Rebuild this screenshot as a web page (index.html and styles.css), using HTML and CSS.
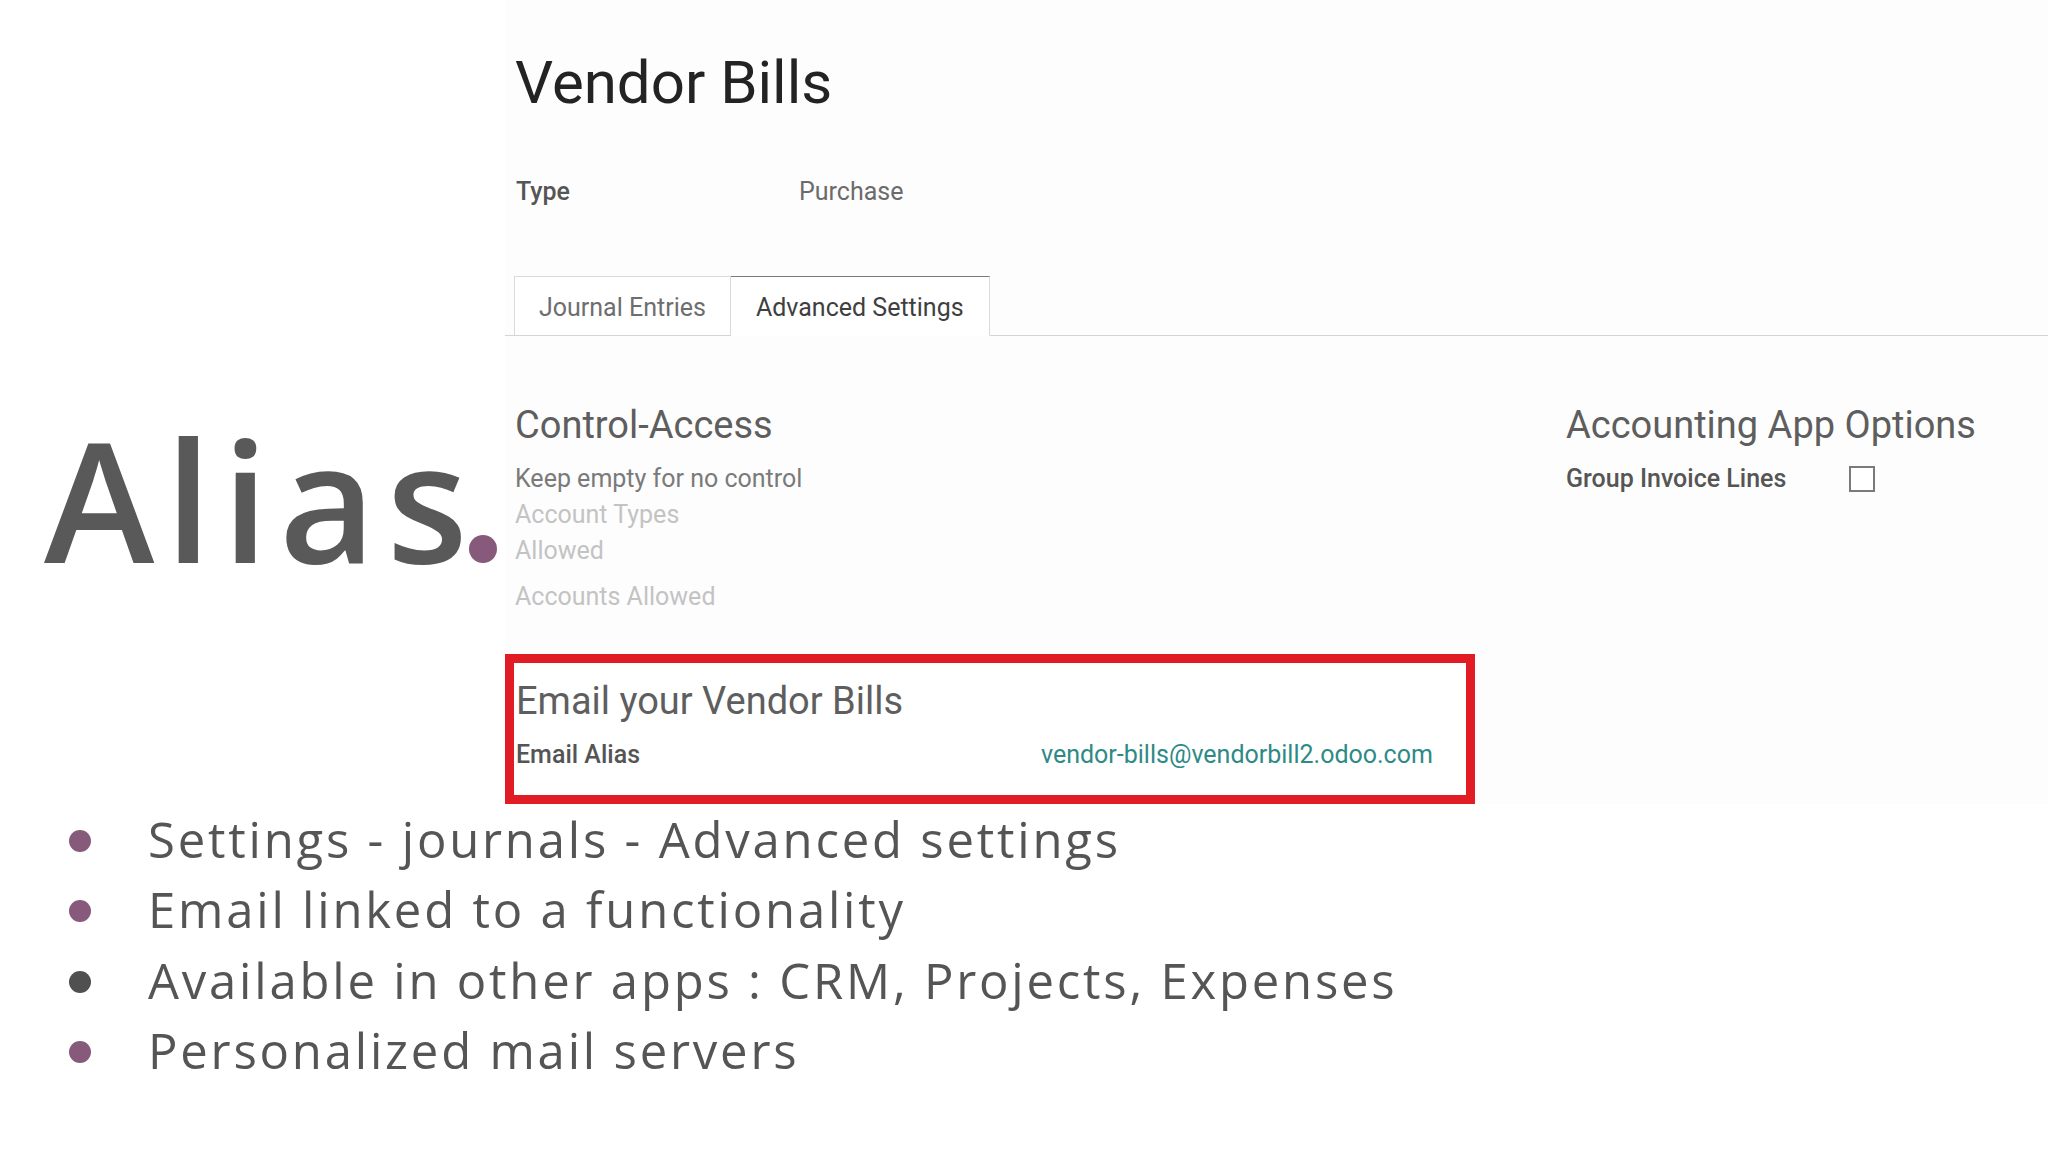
FILE: index.html
```html
<!DOCTYPE html>
<html lang="en">
<head>
    <meta charset="UTF-8">
    <meta name="viewport" content="width=device-width, initial-scale=1.0">
    <title>Alias</title>
    <link rel="stylesheet" href="styles.css">
</head>
<body>
    <div class="slide">
        <div class="aside">
            <h1 class="alias">Alias<span class="dot"></span></h1>
        </div>

        <div class="shot">
            <h2 class="shot-title">Vendor Bills</h2>
            <div class="field-row type-row">
                <span class="label">Type</span>
                <span class="value">Purchase</span>
            </div>

            <ul class="tabs">
                <li class="tab">Journal Entries</li>
                <li class="tab active">Advanced Settings</li>
            </ul>

            <div class="groups">
                <div class="group">
                    <h3 class="group-title">Control-Access</h3>
                    <div class="hint">Keep empty for no control</div>
                    <div class="faded">Account Types<br>Allowed</div>
                    <div class="faded spaced">Accounts Allowed</div>
                </div>
                <div class="group">
                    <h3 class="group-title">Accounting App Options</h3>
                    <div class="field-row check-row">
                        <span class="label">Group Invoice Lines</span>
                        <span class="checkbox"></span>
                    </div>
                </div>
            </div>

            <div class="highlight">
                <h3 class="group-title">Email your Vendor Bills</h3>
                <div class="alias-row">
                    <span class="label">Email Alias</span>
                    <span class="alias-link">vendor-bills@vendorbill2.odoo.com</span>
                </div>
            </div>
        </div>

        <ul class="points">
            <li>Settings - journals - Advanced settings</li>
            <li>Email linked to a functionality</li>
            <li class="dark">Available in other apps : CRM, Projects, Expenses</li>
            <li>Personalized mail servers</li>
        </ul>
    </div>
</body>
</html>
```

FILE: styles.css
```css
body {
    margin: 0;
    background: #ffffff;
    font-family: "Open Sans", sans-serif;
    color: #595959;
}
.slide {
    width: 2048px;
    height: 1152px;
    display: grid;
    grid-template-columns: 505px 1fr;
    grid-template-rows: auto 1fr;
    overflow: hidden;
}

/* big slide title */
.aside {
    padding: 415px 0 0 44px;
}
.alias {
    margin: 0;
    white-space: nowrap;
    font-family: "Open Sans", sans-serif;
    font-size: 167px;
    line-height: 167px;
    font-weight: 600;
    letter-spacing: 10.5px;
    color: #595959;
}
.dot {
    display: inline-block;
    width: 28px;
    height: 28px;
    margin-left: -9px;
    border-radius: 50%;
    background: #875a7b; /* odoo purple */
}

/* odoo screenshot */
.shot {
    font-family: Roboto, sans-serif;
    font-size: 25px;
    color: #666;
    background: #fdfdfd;
}
.shot-title {
    margin: 49px 0 0 10px;
    font-size: 60px;
    line-height: 68px;
    font-weight: 400;
    color: #232323;
}
.field-row {
    display: grid;
    grid-template-columns: 283px auto;
    align-items: center;
    line-height: 36px;
}
.type-row {
    margin: 57px 0 0 11px;
}
.label {
    font-weight: 500;
    color: #555;
}
.value {
    color: #6b6b6b;
}
.tabs {
    display: flex;
    list-style: none;
    margin: 66px 0 0;
    padding: 0 0 0 9px;
    border-bottom: 1px solid #d4d4d4;
}
.tab {
    margin-bottom: -1px;
    padding: 16px 24px 12px;
    line-height: 30px;
    border: 1px solid #dadada;
    border-bottom-color: #d4d4d4;
    color: #6e6e6e;
    background: #fff;
}
.tab + .tab {
    border-left: none;
}
.tab.active {
    border-top-color: #7a7a7a;
    border-bottom-color: #fff;
    padding: 16px 25px 12px;
    color: #3f3f3f;
}
.groups {
    display: grid;
    grid-template-columns: 1051px 1fr;
    margin-top: 67px;
    padding-left: 10px;
}
.group-title {
    margin: 0;
    font-size: 38px;
    line-height: 44px;
    font-weight: 400;
    color: #5e5e5e;
}
.hint {
    margin-top: 14px;
    line-height: 36px;
    color: #7a7a7a;
}
.faded {
    line-height: 36px;
    color: #c3c3c3;
}
.faded.spaced {
    margin-top: 10px;
}
.check-row {
    margin-top: 14px;
}
.checkbox {
    width: 22px;
    height: 22px;
    border: 2px solid #7a7a7a;
    background: #fff;
}

/* red frame around the alias field */
.highlight {
    width: 970px;
    box-sizing: border-box;
    margin-top: 39px;
    padding: 16px 0 22px 2px;
    border: 9px solid #e21c24;
    background: #fff;
}
.alias-row {
    display: grid;
    grid-template-columns: 525px auto;
    margin-top: 14px;
    line-height: 36px;
}
.alias-link {
    color: #2e8a86;
}

/* bullet points */
.points {
    grid-column: 1 / 3;
    list-style: none;
    margin: 0;
    padding: 0 0 0 69px;
    font-size: 49px;
    line-height: 70.3px;
    letter-spacing: 2.8px;
    color: #555;
}
.points li {
    display: flex;
    align-items: center;
}
.points li::before {
    content: "";
    flex: none;
    width: 22px;
    height: 22px;
    margin: 4px 57px 0 0;
    border-radius: 50%;
    background: #875a7b;
}
.points li.dark::before {
    background: #505050;
}
```
